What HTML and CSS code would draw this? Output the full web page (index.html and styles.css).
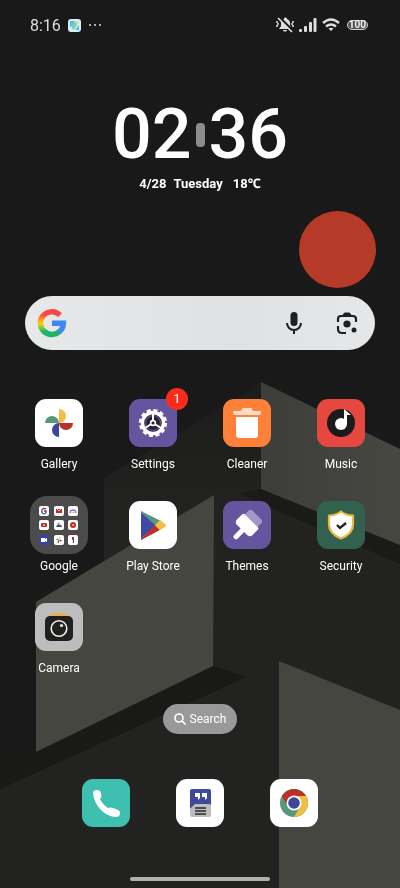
FILE: index.html
```html
<!DOCTYPE html>
<html lang="en">
<head>
<meta charset="utf-8">
<meta name="viewport" content="width=device-width, initial-scale=1">
<title>Home screen</title>
<link rel="stylesheet" href="styles.css">
</head>
<body>
<svg class="wallpaper" viewBox="0 0 400 888" preserveAspectRatio="xMidYMid slice" aria-hidden="true">
  <defs>
    <linearGradient id="panel" x1="0" y1="0" x2="1" y2="0"><stop offset="0" stop-color="#3d3d3a"/><stop offset="1" stop-color="#474742"/></linearGradient>
    <linearGradient id="back" x1="0" y1="0" x2="0" y2="1"><stop offset="0" stop-color="#1c1c1b"/><stop offset="1" stop-color="#242422"/></linearGradient>
  </defs>
  <rect width="400" height="888" fill="#191919"/>
  <path d="M104 478L261 384V492L400 564V888H0V789L246 677L213 666L104 700Z" fill="#222220"/>
  <path d="M104 478L261 384V489L214 500L104 560Z" fill="url(#back)"/>
  <path d="M36 751L213 666L246 677L0 789V751Z" fill="#191918"/>
  <path d="M261 489L400 545V564L240 494Z" fill="#1a1a19"/>
  <path d="M261 382L400 449V545L261 489Z" fill="url(#panel)"/>
  <path d="M36 602L214 495L213 666L36 752Z" fill="#464641"/>
  <path d="M279 661L400 710V888H279Z" fill="#464641"/>
</svg>
<div class="screen">
  <header class="status">
    <div class="status-side">
      <span class="time">8:16</span>
      <svg width="13" height="13" viewBox="0 0 13 13" aria-hidden="true"><rect width="13" height="13" rx="3" fill="#d5eefa"/><path d="M2 2h5l-2 4-3 2zM8 10l3-4v5H7z" fill="#55b9ec"/><path d="M3 7l3-3 4-1-2 5-3 3z" fill="#73d6a0"/><path d="M7 3l3-1-1 4z" fill="#e3cf70"/></svg>
      <svg width="14" height="13" viewBox="0 0 14 13" fill="#ddd" aria-hidden="true"><circle cx="2" cy="6" r="1"/><circle cx="7" cy="6" r="1"/><circle cx="12" cy="6" r="1"/></svg>
    </div>
    <div class="status-side status-icons">
      <svg width="18" height="18" viewBox="0 0 18 18" aria-hidden="true"><path d="M3 13l2-3V7c0-2 1-4 3-4 0-2 3-2 3 0 2 1 3 2 3 4v3l2 3zM7 14h4c0 2-4 2-4 0z" fill="#ddd"/><path d="M1 5v2M2 7v2M1 9v2M17 5v2M16 7v2M17 9v2" stroke="#ddd" stroke-width="1.6"/><path d="M3 1l14 14" stroke="#191919" stroke-width="2.500"/><path d="M2 2l14 14" stroke="#ddd" stroke-width="1.7"/></svg>
      <svg width="18" height="16" viewBox="0 0 18 16" fill="#ddd" aria-hidden="true"><rect y="12" width="3" height="3" rx="1"/><rect x="5" y="9" width="3" height="6" rx="1"/><rect x="10" y="5" width="3" height="10" rx="1"/><rect x="14.500" y="1" width="3" height="14" rx="1"/></svg>
      <svg width="18" height="14" viewBox="0 0 18 14" fill="none" stroke="#ddd" stroke-width="2.6" aria-hidden="true"><path d="M1 5Q9-2 17 5M4 8.500q5-4 10 0"/><path d="M6.500 10.500q2.500-1.500 5 0L9 13z" fill="#ddd" stroke="none"/></svg>
      <span class="battery">100</span>
    </div>
  </header>

  <section class="clock">
    <div class="digits"><span>02</span><i class="colon"></i><span>36</span></div>
    <div class="date"><span>4/28</span><span>Tuesday</span><span class="temp">18℃</span></div>
  </section>

  <div class="dot"></div>

  <form class="search-bar">
    <svg width="30" height="30" viewBox="0 0 30 30" fill="none" stroke-width="5.400" aria-hidden="true">
      <defs><linearGradient id="gl" x1="0" y1="0" x2="0" y2="1"><stop offset="0" stop-color="#f8563f"/><stop offset=".25" stop-color="#f99a1c"/><stop offset=".5" stop-color="#fbd00b"/><stop offset=".8" stop-color="#5cc446"/><stop offset="1" stop-color="#18b35a"/></linearGradient></defs>
      <path d="M23 7.200A11.400 11.400 0 0 0 5 9.500" stroke="#f9484a"/>
      <path d="M6.600 7.200A11.400 11.400 0 0 0 8 24.300" stroke="url(#gl)"/>
      <path d="M7 23.300A11.400 11.400 0 0 0 22.500 23.600" stroke="#1cb368"/>
      <path d="M21.500 24.300A11.400 11.400 0 0 0 26.400 15.300H15" stroke="#3f88f4"/>
    </svg>
    <input type="text" aria-label="Search the web">
    <button type="button" aria-label="Voice search"><svg width="24" height="24" viewBox="0 0 24 24"><rect x="8.500" y="1" width="7" height="14" rx="3.500" fill="#1e1f22"/><path d="M5 12a7 7 0 0 0 14 0M12 19v4" fill="none" stroke="#1e1f22" stroke-width="2"/></svg></button>
    <button type="button" aria-label="Search with camera"><svg width="24" height="24" viewBox="0 0 24 24" fill="none" stroke="#1e1f22" stroke-width="2.200"><path d="M3 11V8q0-3 3-3h12q3 0 3 3v3M3 15v3q0 4 4 4h4"/><path d="M8 4l1.500-2h5L16 4z" fill="#1e1f22" stroke-width="1"/><circle cx="12" cy="13" r="3.600" fill="#1e1f22" stroke="none"/><circle cx="19" cy="19" r="2.500" fill="#1e1f22" stroke="none"/></svg></button>
  </form>

  <main class="apps">
    <button class="app"><svg class="icon" viewBox="0 0 48 48"><rect width="48" height="48" rx="11" fill="#fff"/><path d="M24 24V10a7 7 0 0 1 0 14z" fill="#f5bd41"/><path d="M24 24h14a7 7 0 0 1-14 0z" fill="#bd3027"/><path d="M24 24v14a7 7 0 0 1 0-14z" fill="#3c479b"/><path d="M24 24H10a7 7 0 0 1 14 0z" fill="#57977b"/></svg><span>Gallery</span></button>
    <button class="app"><svg class="icon" viewBox="0 0 48 48"><rect width="48" height="48" rx="11" fill="#65559f"/><circle cx="24" cy="24" r="12.800" fill="none" stroke="#fff" stroke-width="2.600" stroke-dasharray="4 2.702"/><circle cx="24" cy="24" r="10.500" fill="#25212f" stroke="#fff" stroke-width="3.400"/><circle cx="24" cy="24" r="7.500" fill="none" stroke="#584b83" stroke-width="1.500"/><path d="M24 24V14M24 24l-8 5M24 24l8 5" stroke="#fff" stroke-width="2"/><circle cx="24" cy="24" r="2.400" fill="#25212f" stroke="#fff" stroke-width="1.600"/></svg><b class="badge">1</b><span>Settings</span></button>
    <button class="app"><svg class="icon" viewBox="0 0 48 48"><rect width="48" height="48" rx="11" fill="#ff8038"/><path d="M13 18h22v18q0 3-3 3H16q-3 0-3-3z" fill="#fff"/><path d="M10 13q0-1 1-1h7l1-2q0-1 1-1h8q1 0 1 1l1 2h7q1 0 1 1v1q0 2-2 2H12q-2 0-2-2z" fill="#ffdcc5"/></svg><span>Cleaner</span></button>
    <button class="app"><svg class="icon" viewBox="0 0 48 48"><rect width="48" height="48" rx="11" fill="#e64840"/><circle cx="24" cy="24" r="14" fill="#1c1a1a"/><circle cx="24" cy="25" r="6" fill="#fff"/><path d="M27 25V10l7 6h-4v9z" fill="#fff"/></svg><span>Music</span></button>
    <button class="app"><svg class="icon folder" viewBox="0 0 58 58">
      <rect width="58" height="58" rx="17" fill="#4b4b4b"/>
      <g fill="#fff"><rect x="9" y="10" width="10" height="10" rx="2"/><rect x="24" y="10" width="10" height="10" rx="2"/><rect x="38" y="10" width="10" height="10" rx="2"/><rect x="9" y="24" width="10" height="10" rx="2"/><rect x="24" y="24" width="10" height="10" rx="2"/><rect x="38" y="24" width="10" height="10" rx="2"/><rect x="24" y="39" width="10" height="10" rx="2"/><rect x="38" y="39" width="10" height="10" rx="2"/></g>
      <rect x="9" y="39" width="10" height="10" rx="2" fill="#3b449b"/>
      <path d="M16 13a2.600 2.600 0 0 0-4 1" fill="none" stroke="#bd3027" stroke-width="1.400"/><path d="M12 14q-1 3 2 4 3-1 2-3h-2" fill="none" stroke="#3c479b" stroke-width="1.300"/>
      <path d="M26 13h6v4h-6z" fill="#bd3027"/><path d="M27 13l2 2 2-2" fill="none" stroke="#f3b7b2"/>
      <path d="M40 17a3 3 0 0 1 6 0" fill="none" stroke="#7481bd" stroke-width="1.300"/><path d="M41 17q2-3 4 0z" fill="#f5bd41"/>
      <rect x="11" y="27" width="6" height="4" rx="1" fill="#bd3027"/><path d="M13.500 28l2 1-2 1z" fill="#fff"/>
      <path d="M29 26l-3 5h3z" fill="#57977b"/><path d="M29 26l3 5h-3z" fill="#f5bd41"/><path d="M26 31l1.500-2H31l1 2z" fill="#3c479b"/>
      <circle cx="43" cy="29" r="3" fill="#bd3027"/><path d="M42.500 28l2 1-2 1z" fill="#fff"/>
      <path d="M11 42h4v1l2-1v4l-2-1v1h-4z" fill="#fff"/>
      <path d="M29 44v-3q3 1 0 3z" fill="#f5bd41"/><path d="M29 44h3q-1 3-3 0z" fill="#bd3027"/><path d="M29 44v3q-3-1 0-3z" fill="#3c479b"/><path d="M29 44h-3q1-3 3 0z" fill="#57977b"/>
      <path d="M42 41h2v3h-2z" fill="#bd3027"/><path d="M43 43h1v4h-1z" fill="#3c479b"/>
    </svg><span>Google</span></button>
    <button class="app"><svg class="icon" viewBox="0 0 48 48"><rect width="48" height="48" rx="11" fill="#fff"/><path d="M12 11v27l15-14z" fill="#3f4aa5"/><path d="M12 11q0-2 2 0l18 9-5 5z" fill="#57977b"/><path d="M12 38q0 2 2 0l17-9-5-5z" fill="#bd3027"/><path d="M31 19l5 4q2 1 0 3l-5 3-5-5z" fill="#f5bd41"/></svg><span>Play Store</span></button>
    <button class="app"><svg class="icon" viewBox="0 0 48 48"><rect width="48" height="48" rx="11" fill="#65559f"/><g transform="rotate(45 24 24)"><rect x="15" y="10" width="18" height="14" rx="3" fill="#a397c8"/><path d="M13 20q0-2 2-2h18q2 0 2 2v7q0 4-4 4h-4v9q0 2.500-2.500 2.500T22 40v-9h-5q-4 0-4-4z" fill="#fff"/></g></svg><span>Themes</span></button>
    <button class="app"><svg class="icon" viewBox="0 0 48 48"><rect width="48" height="48" rx="11" fill="#32614f"/><path d="M24 10.500q5 4 12 4v9q0 9-12 14-12-5-12-14v-9q7 0 12-4z" fill="#fff" stroke="#efb83e" stroke-width="2.200" stroke-linejoin="round"/><path d="M20 24l3 3 6-5" fill="none" stroke="#20211f" stroke-width="2.400"/></svg><span>Security</span></button>
    <button class="app"><svg class="icon" viewBox="0 0 48 48"><rect width="48" height="48" rx="11" fill="#bdbdbd"/><path d="M16 12q1-2 3-2h11q2 0 3 2v2H16z" fill="#e9ad55"/><rect x="10" y="13" width="28" height="25" rx="5" fill="#20201f"/><circle cx="24" cy="25.500" r="7.800" fill="none" stroke="#eee" stroke-width="1.600"/><circle cx="26.500" cy="22.500" r="1.600" fill="#eee"/></svg><span>Camera</span></button>
  </main>

  <button class="finder"><svg width="12" height="12" viewBox="0 0 12 12" fill="none" stroke="#fff" stroke-width="1.600" aria-hidden="true"><circle cx="5" cy="5" r="4"/><path d="M8 8l3.500 3.500"/></svg>Search</button>

  <nav class="dock">
    <button class="app" aria-label="Phone"><svg class="icon" viewBox="0 0 48 48"><rect width="48" height="48" rx="11" fill="#3dc0b0"/><path d="M11 14q0-3 4-3 3 0 4 3 1 4-1 6 3 6 8 9 2-1 5 0l5 2q2 1 2 3 0 4-4 4Q26 38 19 31T11 14z" fill="#fff"/></svg></button>
    <button class="app" aria-label="Messages"><svg class="icon" viewBox="0 0 48 48"><rect width="48" height="48" rx="11" fill="#fff"/><path d="M14 12q0-2 2-2h17q2 0 2 2v14H19l-5 4z" fill="#3e4999"/><path d="M19 14h5v5l-2 2v-3h-3zM26 14h5v5l-2 2v-3h-3z" fill="#fff"/><path d="M14 30l5-5h14q2 0 2 2v9q0 2-2 2H16q-2 0-2-2z" fill="#bdbdbd"/><path d="M19 29h11M19 32h11M19 35h11" stroke="#292929" stroke-width="1.300"/></svg></button>
    <button class="app" aria-label="Chrome"><svg class="icon" viewBox="0 0 48 48"><rect width="48" height="48" rx="11" fill="#fff"/><circle cx="24" cy="24" r="14" fill="#57977b"/><path d="M11.900 17a14 14 0 0 1 24.200 0H24l-6 10.500z" fill="#bd3027"/><path d="M36.100 17A14 14 0 0 1 24 38l6-10.500L24 17z" fill="#f5bd41"/><circle cx="24" cy="24" r="7.500" fill="#fff"/><circle cx="24" cy="24" r="5.800" fill="#3c479b"/></svg></button>
  </nav>
  <div class="home-bar"></div>
</div>
</body>
</html>
```
FILE: styles.css
```css
* {
  box-sizing: border-box;
}

body {
  margin: 0;
  background: #191919;
  color: #fff;
  font-family: Roboto, "Noto Sans", sans-serif;
}

button {
  padding: 0;
  border: 0;
  background: none;
  color: inherit;
  font: inherit;
}

svg {
  display: block;
}

.wallpaper {
  position: fixed;
  inset: 0;
  z-index: -1;
  width: 100%;
  height: 100%;
}

.screen {
  display: flex;
  flex-direction: column;
  min-height: 100vh;
  padding: 16px 12px 7px;
}

.status {
  display: flex;
  justify-content: space-between;
  padding: 0 20px 0 18px;
}

.status-side {
  display: flex;
  align-items: center;
  gap: 7px;
  height: 18px;
  color: #ddd;
}

.status-icons {
  gap: 5px;
}

.time {
  font-size: 16px;
}

.battery {
  margin-left: 2px;
  padding: 0 1px;
  border: 1px solid #ccc;
  border-radius: 5px;
  background: #555;
  color: #eee;
  font-size: 10px;
  font-weight: 700;
  line-height: 8px;
}

.clock {
  display: flex;
  flex-direction: column;
  align-items: center;
  margin-top: 59px;
}

.digits {
  display: flex;
  align-items: center;
  gap: 4px;
  font-size: 70px;
  font-weight: 500;
  line-height: 83px;
}

.colon {
  width: 9px;
  height: 24px;
  border-radius: 4px;
  background: #8c8c8c;
}

.date {
  display: flex;
  gap: 7px;
  font-size: 13px;
  font-weight: 700;
  line-height: 16px;
}

.temp {
  margin-left: 3px;
}

.dot {
  align-self: flex-end;
  width: 77px;
  height: 77px;
  margin: 19px 12px 8px;
  border-radius: 50%;
  background: #b63a28;
}

.search-bar {
  display: flex;
  align-items: center;
  gap: 29px;
  height: 54px;
  margin: 0 13px;
  padding: 0 16px 0 12px;
  border-radius: 27px;
  background: linear-gradient(90deg, #e6e8e9, #e0e1e3 60%, #e5e7e8);
}

.search-bar input {
  flex: 1;
  min-width: 0;
  border: 0;
  outline: 0;
  background: none;
  font: inherit;
}

.apps {
  display: grid;
  grid-template-columns: repeat(4, 1fr);
  row-gap: 29px;
  margin-top: 49px;
}

.app {
  position: relative;
  display: flex;
  flex-direction: column;
  align-items: center;
  gap: 10px;
  font-size: 12px;
  line-height: 15px;
}

.icon {
  width: 48px;
  height: 48px;
}

.folder {
  width: 58px;
  height: 58px;
  margin: -5px;
}

.badge {
  position: absolute;
  top: -11px;
  left: calc(50% + 13px);
  width: 22px;
  height: 22px;
  border-radius: 50%;
  background: #fb2c1b;
  font-size: 13px;
  font-weight: 400;
  line-height: 22px;
}

.finder {
  display: flex;
  align-items: center;
  align-self: center;
  gap: 4px;
  height: 30px;
  margin-top: 28px;
  padding: 0 11px;
  border-radius: 15px;
  background: #999;
  font-size: 12px;
}

.dock {
  display: grid;
  grid-template-columns: repeat(3, 94px);
  justify-content: center;
  margin-top: 45px;
}

.home-bar {
  align-self: center;
  width: 140px;
  height: 4px;
  margin-top: auto;
  border-radius: 2px;
  background: #b0b0b0;
}
```
